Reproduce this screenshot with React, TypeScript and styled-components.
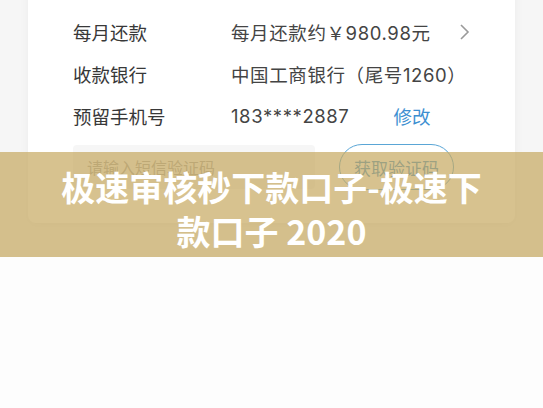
import React from 'react';
import styled, { createGlobalStyle } from 'styled-components';

const GlobalStyle = createGlobalStyle`
  html, body {
    margin: 0;
    padding: 0;
    background: #fdfdfd;
  }
  * {
    box-sizing: border-box;
  }
  body {
    font-family: "Noto Sans CJK SC", "Noto Sans", sans-serif;
  }
`;

const Hero = styled.div`
  position: relative;
  height: 257px;
  overflow: hidden;
  background: #f6f6f6;
`;

const Card = styled.div`
  margin: -41px 28px 0;
  padding: 10px 0 33px 45px;
  background: #ffffff;
  border-radius: 8px;
  box-shadow: 0 2px 10px rgba(0, 0, 0, 0.05);
`;

const Row = styled.div`
  display: flex;
  align-items: center;
  height: 42px;
`;

const Label = styled.div`
  width: 158px;
  font-size: 18.5px;
  color: #383838;
`;

const Value = styled.div`
  display: flex;
  align-items: center;
  font-family: "Inter", "Noto Sans CJK SC", sans-serif;
  font-size: 18.5px;
  letter-spacing: 0.6px;
  color: #444444;
`;

const Edit = styled.span`
  margin-left: 44px;
  font-family: "Noto Sans CJK SC", sans-serif;
  letter-spacing: 0;
  color: #3d8fd1;
`;

const Chevron = styled.svg`
  margin-left: 28px;
`;

const CodeRow = styled.div`
  display: flex;
  align-items: center;
  gap: 24px;
  margin-top: 7px;
`;

const CodeInput = styled.div`
  width: 242px;
  height: 44px;
  padding-left: 14px;
  display: flex;
  align-items: center;
  background: #f6f6f6;
  border-radius: 4px;
  font-size: 16px;
  color: #a8a8a8;
`;

const CodeButton = styled.div`
  width: 115px;
  height: 46px;
  border: 1.5px solid #5aa6d6;
  border-radius: 23px;
  display: flex;
  align-items: center;
  justify-content: center;
  font-size: 17px;
  color: #3d8fd1;
`;

const Caption = styled.div`
  position: absolute;
  left: 0;
  right: 0;
  bottom: 0;
  height: 105px;
  padding: 8px 50px 0;
  display: flex;
  align-items: center;
  justify-content: center;
  background: rgba(198, 168, 96, 0.7);
`;

const Title = styled.h1`
  margin: 0;
  text-align: center;
  font-size: 34px;
  line-height: 44px;
  font-weight: 700;
  color: #ffffff;
`;

const rows = [
  { label: '借款期限', value: '12个月' },
  { label: '每月还款', value: '每月还款约￥980.98元', chevron: true },
  { label: '收款银行', value: '中国工商银行（尾号1260）' },
  { label: '预留手机号', value: '183****2887', edit: true },
];

const App: React.FC = () => (
  <>
    <GlobalStyle />
    <Hero>
      <Card>
        {rows.map(r => (
          <Row key={r.label}>
            <Label>{r.label}</Label>
            <Value>
              {r.value}
              {r.chevron && (
                <Chevron width="11" height="18" viewBox="0 0 11 18">
                  <path d="M2 2 L9 9 L2 16" fill="none" stroke="#9a9a9a" strokeWidth="1.6" />
                </Chevron>
              )}
              {r.edit && <Edit>修改</Edit>}
            </Value>
          </Row>
        ))}
        <CodeRow>
          <CodeInput>请输入短信验证码</CodeInput>
          <CodeButton>获取验证码</CodeButton>
        </CodeRow>
      </Card>
      <Caption>
        <Title>极速审核秒下款口子-极速下款口子 2020</Title>
      </Caption>
    </Hero>
  </>
);

export default App;
